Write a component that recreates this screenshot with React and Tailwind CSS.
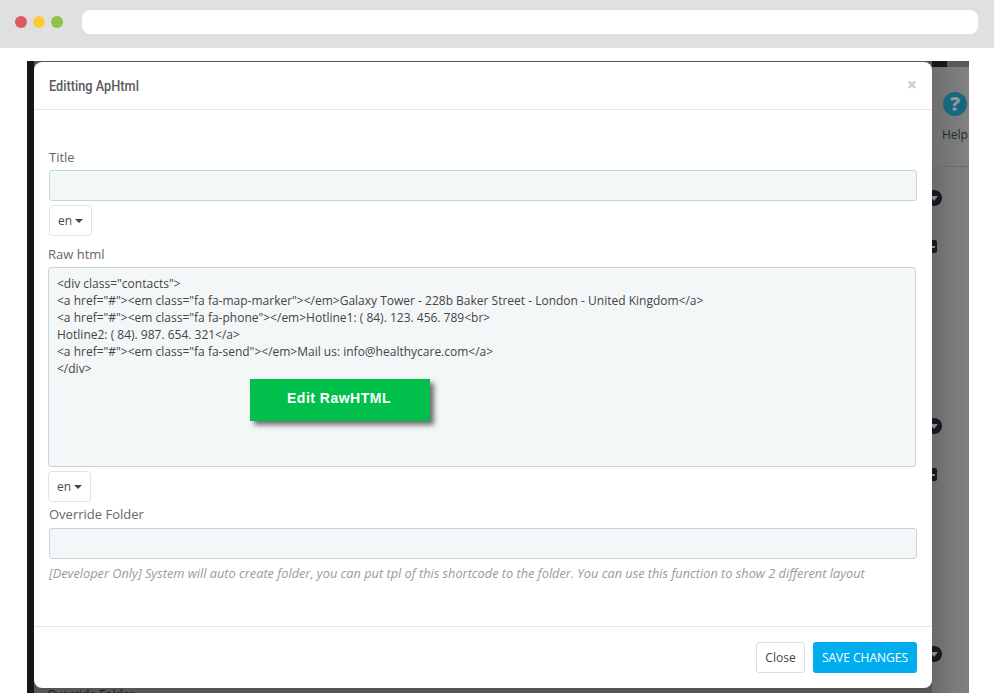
import React from 'react';

const font = "font-['Open_Sans',sans-serif]";

const LangButton = ({ className }) => (
  <button className={`flex h-[31px] w-[43px] items-center justify-center gap-[3px] rounded-[4px] border border-[#e3e3e3] bg-white text-[12px] text-[#4a4a4a] ${className}`}>
    en
    <span className="mt-[1px] h-0 w-0 border-x-[4px] border-t-[4px] border-x-transparent border-t-[#444]" />
  </button>
);

const Field = () => (
  <div className="h-[31px] w-[868px] rounded-[3px] border border-[#c3d6da] bg-[#f4f7f8]" />
);

const rawHtml = [
  '<div class="contacts">',
  '<a href="#"><em class="fa fa-map-marker"></em>Galaxy Tower - 228b Baker Street - London - United Kingdom</a>',
  '<a href="#"><em class="fa fa-phone"></em>Hotline1: ( 84). 123. 456. 789<br>',
  'Hotline2: ( 84). 987. 654. 321</a>',
  '<a href="#"><em class="fa fa-send"></em>Mail us: info@healthycare.com</a>',
  '</div>',
];

// dark knobs of the page behind the modal, half covered by it
const RoundKnob = ({ top }) => (
  <span className="absolute left-[-6px] flex h-[16px] w-[16px] items-center justify-center rounded-full bg-[#14181f]" style={{ top }}>
    <span className="h-0 w-0 border-x-[4px] border-t-[5px] border-x-transparent border-t-[#888]" />
  </span>
);

const SquareKnob = ({ top }) => (
  <span className="absolute left-[-6px] flex h-[13px] w-[11px] items-center justify-center rounded-[2px] bg-[#14181f]" style={{ top }}>
    <span className="h-[2px] w-[7px] bg-[#888]" />
  </span>
);

export default function App() {
  return (
    <div className={`h-[693px] w-[994px] overflow-hidden bg-white ${font}`}>
      <div className="flex h-[48px] items-center bg-[#e0e0e0] pb-[4px] pl-[15px] pr-[16px]">
        <div className="flex gap-[6px]">
          <span className="h-[12px] w-[12px] rounded-full bg-[#dc5b5e]" />
          <span className="h-[12px] w-[12px] rounded-full bg-[#fdcb37]" />
          <span className="h-[12px] w-[12px] rounded-full bg-[#8fc24a]" />
        </div>
        <div className="ml-[19px] h-[24px] flex-1 rounded-[8px] bg-white" />
      </div>

      <div className="ml-[27px] mt-[13px] flex h-[632px] w-[942px] bg-[#15171b]">
        <div className="w-[7px] shrink-0" />

        <div className="relative z-10 flex w-[898px] shrink-0 flex-col bg-[#555] pt-[1px]">
          <div className="h-[626px] rounded-[8px] bg-white">
            <div className="flex h-[48px] items-center justify-between border-b border-[#e5e5e5] pl-[15px] pr-[15px]">
              <h4 className="mt-[1px] origin-left scale-x-[0.85] font-['Roboto',sans-serif] text-[15px] font-medium text-[#5a5a5a]">Editting ApHtml</h4>
              <span className="mb-[4px] text-[18px] font-bold leading-none text-[#c9c9c9]">×</span>
            </div>

            <div className="h-[516px] px-[15px] pt-[38px]">
              <label className="block h-[22px] text-[13px] leading-[18px] text-[#666]">Title</label>
              <Field />
              <LangButton className="mt-[4px]" />

              <label className="ml-[-1px] mt-[9px] block h-[22px] text-[13px] leading-[18px] text-[#666]">Raw html</label>
              <div className="relative ml-[-1px] h-[200px] w-[868px] rounded-[3px] border border-[#c3d6da] bg-[#f4f7f8] px-[8px] py-[7px] text-[12px] leading-[17px] text-[#444]">
                {rawHtml.map((line) => (
                  <div key={line}>{line}</div>
                ))}
                <div className="absolute left-[201px] top-[111px] flex h-[42px] w-[180px] items-center justify-center bg-[#00c04b] pb-[3px] pr-[2px] font-['Liberation_Sans',sans-serif] text-[14px] font-bold tracking-[0.5px] text-white shadow-[4px_4px_5px_rgba(0,0,0,0.55)]">
                  Edit RawHTML
                </div>
              </div>
              <LangButton className="ml-[-1px] mt-[4px]" />

              <label className="mt-[3px] block h-[23px] text-[13px] leading-[18px] text-[#666]">Override Folder</label>
              <Field />
              <p className="mt-[6px] text-[12.75px] italic leading-[16px] text-[#9a9a9a]">
                [Developer Only] System will auto create folder, you can put tpl of this shortcode to the folder. You can use this function to show 2 different layout
              </p>
            </div>

            <div className="flex h-[61px] items-start justify-end gap-[8px] border-t border-[#e5e5e5] pr-[15px] pt-[15px]">
              <button className="h-[31px] w-[49px] rounded-[3px] border border-[#dcdcdc] bg-white text-[12px] text-[#444]">Close</button>
              <button className="h-[31px] w-[104px] rounded-[3px] bg-[#00aeef] text-[12px] text-white">SAVE CHANGES</button>
            </div>
          </div>
          <div className="h-[5px] overflow-hidden pl-[13px] text-[12px] leading-[14px] text-[#15171b]">Override Folder</div>
        </div>

        <div className="relative flex w-[37px] shrink-0 flex-col">
          <div className="flex h-[6px] shrink-0">
            <div className="w-[15px] bg-[#15171b]" />
            <div className="flex-1 bg-[#5a5a5a]" />
          </div>
          <div className="flex h-[100px] shrink-0 flex-col items-end border-b border-[#6a6a6a] bg-gradient-to-r from-[#6e6e6e] to-[#828282] pt-[25px]">
            <span className="mr-[2px] flex h-[24px] w-[24px] items-center justify-center rounded-full bg-[#17687f] text-[20px] font-extrabold leading-none text-[#8f979a]">?</span>
            <span className="mt-[11px] w-[27px] text-[12px] leading-[16px] text-[#222b33]">Help</span>
          </div>
          <div className="flex-1 bg-gradient-to-r from-[#6a6a6a] via-[#787878] to-[#808080]" />
          <RoundKnob top="129px" />
          <SquareKnob top="179px" />
          <RoundKnob top="357px" />
          <SquareKnob top="407px" />
          <RoundKnob top="585px" />
        </div>
      </div>
    </div>
  );
}
